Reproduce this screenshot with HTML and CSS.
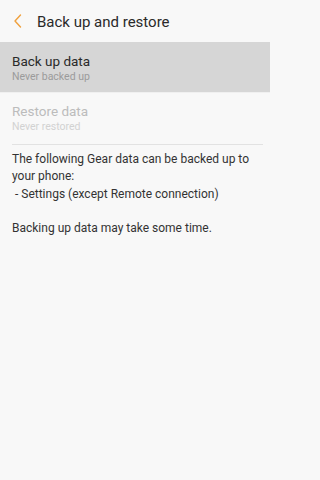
FILE: index.html
```html
<!DOCTYPE html>
<html>
<head>
<meta charset="utf-8">
<link rel="stylesheet" href="styles.css">
</head>
<body>
<div class="screen">
  <header class="header">
    <svg class="back" width="12" height="16" viewBox="0 0 12 16"><polyline points="8.5,2 3,8 8.5,14" fill="none" stroke="#f0a03c" stroke-width="1.4" stroke-linecap="round" stroke-linejoin="round"/></svg>
    <span class="title">Back up and restore</span>
  </header>
  <div class="item item-selected">
    <div class="item-title">Back up data</div>
    <div class="item-sub">Never backed up</div>
  </div>
  <div class="sep-light"></div>
  <div class="item item-disabled">
    <div class="item-title">Restore data</div>
    <div class="item-sub">Never restored</div>
  </div>
  <div class="divider"></div>
  <div class="desc">
    <p>The following Gear data can be backed up to your phone:<br>&nbsp;- Settings (except Remote connection)</p>
    <p>Backing up data may take some time.</p>
  </div>
</div>
</body>
</html>
```
FILE: styles.css
```css
html, body {
  margin: 0;
  padding: 0;
  background: #f8f8f8;
}
body {
  font-family: Roboto, "Noto Sans", sans-serif;
  color: #2c2c2c;
  width: 270px;
  height: 480px;
  overflow: hidden;
}
.screen {
  display: flex;
  flex-direction: column;
}
.header {
  height: 42px;
  display: flex;
  align-items: center;
  padding-left: 12px;
}
.back {
  flex: none;
}
.title {
  margin-left: 13px;
  font-size: 15px;
  line-height: 42px;
  padding-top: 1px;
  color: #2a2a2a;
}
.item {
  padding: 11px 12px 0;
  box-sizing: border-box;
}
.item-selected {
  background: #d6d6d6;
  height: 50px;
}
.sep-light {
  height: 1px;
  background: #f0f0f0;
}
.item-disabled {
  height: 51px;
  padding-top: 10px;
}
.item-title {
  font-size: 13.5px;
  line-height: 17px;
  color: #2a2a2a;
}
.item-sub {
  font-size: 10.5px;
  line-height: 13px;
  color: #9b9b9b;
}
.item-disabled .item-title {
  color: #bcbcbc;
}
.item-disabled .item-sub {
  color: #d2d2d2;
}
.divider {
  height: 1px;
  background: #e2e2e2;
  margin: 0 7px 0 12px;
}
.desc {
  padding: 6px 12px 0;
  font-size: 12px;
  line-height: 17.3px;
  color: #333;
}
.desc p {
  margin: 0 0 17.3px;
}
```
